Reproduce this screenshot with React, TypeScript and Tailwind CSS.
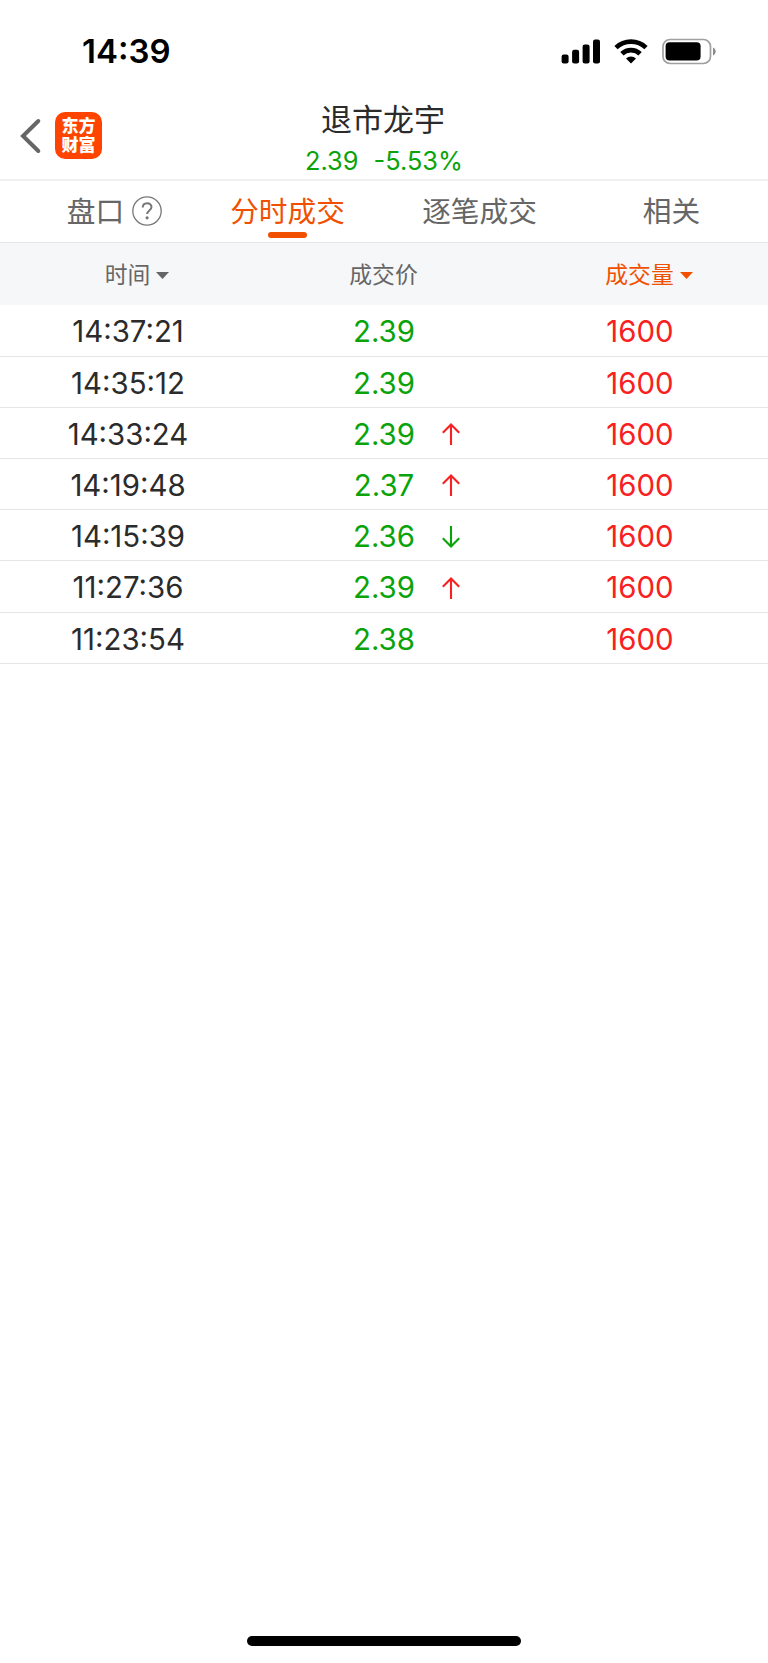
type Trade = { time: string; price: string; dir?: 'up' | 'down'; volume: string };

const trades: Trade[] = [
  { time: '14:37:21', price: '2.39', volume: '1600' },
  { time: '14:35:12', price: '2.39', volume: '1600' },
  { time: '14:33:24', price: '2.39', dir: 'up', volume: '1600' },
  { time: '14:19:48', price: '2.37', dir: 'up', volume: '1600' },
  { time: '14:15:39', price: '2.36', dir: 'down', volume: '1600' },
  { time: '11:27:36', price: '2.39', dir: 'up', volume: '1600' },
  { time: '11:23:54', price: '2.38', volume: '1600' },
];

function StatusBar() {
  return (
    <div className="flex h-[102px] items-center justify-between pl-[82px] pr-[52px]">
      <div className="text-[33px] font-semibold leading-none text-black">14:39</div>
      <div className="flex items-center">
        <svg width="39" height="25" viewBox="0 0 39 25" className="mr-[14px]">
          <rect x="0.6" y="15.5" width="7" height="9" rx="2.2" />
          <rect x="11.1" y="10.7" width="7" height="13.8" rx="2.2" />
          <rect x="21.6" y="5.6" width="7" height="18.9" rx="2.2" />
          <rect x="32" y="0.4" width="7" height="24.1" rx="2.2" />
        </svg>
        <svg width="34" height="25" viewBox="0 0 34 25" className="mr-[14px]">
          <g fill="none" stroke="#000" strokeWidth="4.7">
            <path d="M2 8.6a21.8 21.8 0 0 1 30 0" />
            <path d="M7.9 14.7a13.2 13.2 0 0 1 18.2 0" />
          </g>
          <path d="M17 24.5l-5-5.1a7.3 7.3 0 0 1 10 0z" />
        </svg>
        <svg width="54" height="27" viewBox="0 0 54 27">
          <rect x="1" y="1.5" width="47.5" height="24" rx="7" fill="#fff" stroke="#a0a0a0" strokeWidth="1.7" />
          <rect x="3.6" y="4.2" width="35" height="18.4" rx="4" />
          <path d="M51 9.5c3.6 1.4 3.6 6.600 0 8z" fill="#8c8c8c" />
        </svg>
      </div>
    </div>
  );
}

function Header() {
  return (
    <header className="grid h-[79px] grid-cols-3 border-b-2 border-[#efeff0]">
      <div className="flex items-start pl-[20px] pt-[10px]">
        <svg width="22" height="36" viewBox="0 0 22 36" className="mt-[6px]">
          <path d="M18.300 3L3 18l15.300 15" fill="none" stroke="#666" strokeWidth="4" strokeLinecap="round" strokeLinejoin="miter" />
        </svg>
        <div className="ml-[13px] flex h-[47px] w-[47px] flex-col items-center justify-center rounded-[10px] bg-[#ff4400] pb-[3px] font-['Noto_Sans_CJK_SC',sans-serif] text-[17px] font-black leading-[19.500px] text-white">
          <span>东方</span>
          <span>财富</span>
        </div>
      </div>
      <div className="flex flex-col items-center">
        <h1 className="mt-[-2px] mr-[2px] text-[31px] leading-[40px] text-[#2b2b2b]">退市龙宇</h1>
        <div className="mt-[5px] flex gap-[15px] text-[25.400px] leading-[32px] text-[#0aa30a]">
          <span>2.39</span>
          <span>-5.53%</span>
        </div>
      </div>
    </header>
  );
}

function Tabs() {
  return (
    <nav className="grid h-[62px] grid-cols-4 border-b border-[#e4e5e8] text-[28.700px] leading-[62px] text-[#666]">
      <div className="flex items-center justify-center pr-[1px]">
        <span>盘口</span>
        <svg width="30" height="30" viewBox="0 0 30 30" className="ml-[8px] mr-[-38px] mt-[-3px]">
          <circle cx="15" cy="15" r="14.200" fill="none" stroke="#777" strokeWidth="1.300" />
          <path d="M10.700 11.500c.2-5.500 8.800-5.600 8.800-.4 0 3.400-4.400 3.300-4.400 7" fill="none" stroke="#777" strokeWidth="2" />
          <circle cx="15.100" cy="21.800" r="1.600" fill="#777" />
        </svg>
      </div>
      <div className="flex flex-col items-center pr-[1px] text-[#f05000]">
        <span className="h-[51px]">分时成交</span>
        <span className="h-[6px] w-[39px] rounded-full bg-[#f05000]" />
      </div>
      <div className="pr-[1px] text-center">逐笔成交</div>
      <div className="pr-[1px] text-center">相关</div>
    </nav>
  );
}

function Caret() {
  return (
    <svg width="13" height="7" viewBox="0 0 13 7" className="ml-[6px] mr-[-19px] mt-[1px]" fill="currentColor">
      <path d="M0 0h13L6.500 7z" />
    </svg>
  );
}

function Arrow({ dir }: { dir: 'up' | 'down' }) {
  const look = dir === 'up' ? 'text-[#f82020]' : 'rotate-180 text-[#0aa30a]';
  return (
    <svg width="18" height="22" viewBox="0 0 18 22" className={look} fill="none" stroke="currentColor" strokeWidth="2.100">
      <path d="M9 22V1.500M.8 9.700L9 1.500l8.200 8.200" />
    </svg>
  );
}

export default function App() {
  return (
    <div className="flex h-[1663px] w-[768px] flex-col bg-white font-['Inter','Noto_Sans_CJK_SC',sans-serif]">
      <StatusBar />
      <Header />
      <Tabs />
      <div className="grid h-[62.400px] grid-cols-3 bg-[#f6f7f9] pt-[1px] text-[22.800px] text-[#666]">
        <div className="flex items-center justify-center pr-[1px]">时间<Caret /></div>
        <div className="flex items-center justify-center pr-[1px]">成交价</div>
        <div className="flex items-center justify-center pr-[1px] text-[#f05000]">成交量<Caret /></div>
      </div>
      <div className="flex-1">
        {trades.map((t) => (
          <div key={t.time} className="grid h-[51.200px] grid-cols-3 border-b border-[#e6e6e8] text-[29.400px] leading-[53px]">
            <div className="h-[50px] text-center text-[#2b2b2b]">{t.time}</div>
            <div className="grid h-[50px] grid-cols-[1fr_62px_1fr] text-[#0aa30a]">
              <span className="col-start-2 text-center">{t.price}</span>
              <span className="flex items-center pl-[27px]">{t.dir && <Arrow dir={t.dir} />}</span>
            </div>
            <div className="h-[50px] text-center text-[#f82020]">{t.volume}</div>
          </div>
        ))}
      </div>
      <div className="mb-[17px] h-[10px] w-[274px] self-center rounded-full bg-black" />
    </div>
  );
}
